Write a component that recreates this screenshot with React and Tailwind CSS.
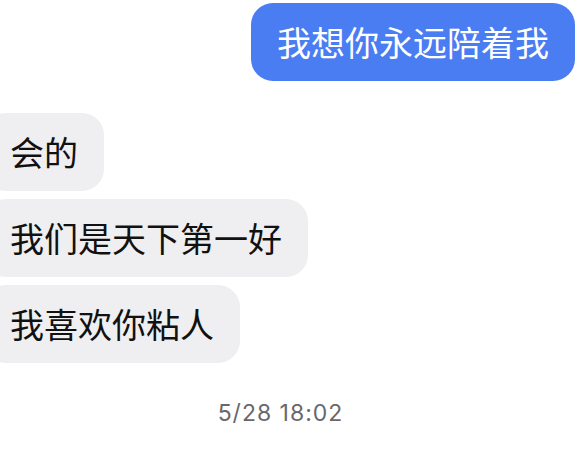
import React from 'react';

const cjk = { fontFamily: '"Noto Sans CJK SC", "Noto Sans", sans-serif' };

const Outgoing = ({ text }) => (
  <div className="flex justify-end pr-[5px]">
    <div
      className="bg-[#4a7cf2] text-white rounded-[22px] px-[26px] py-[19px] text-[34px] leading-[40px] whitespace-nowrap"
      style={cjk}
    >
      {text}
    </div>
  </div>
);

const Incoming = ({ text }) => (
  <div className="flex">
    <div
      className="-ml-[16px] bg-[#efeff2] text-[#111] rounded-[22px] pl-[26px] pr-[26px] py-[19px] text-[34px] leading-[40px] whitespace-nowrap"
      style={cjk}
    >
      {text}
    </div>
  </div>
);

export default function App() {
  return (
    <div className="w-[580px] h-[452px] bg-white overflow-hidden flex flex-col pt-[3px]">
      <Outgoing text="我想你永远陪着我" />

      <div className="flex flex-col gap-[8px] mt-[32px]">
        <Incoming text="会的" />
        <Incoming text="我们是天下第一好" />
        <Incoming text="我喜欢你粘人" />
      </div>

      {/* Timestamp */}
      <div className="mt-[36px] flex justify-center pr-[19px]">
        <span
          className="text-[23px] leading-[28px] tracking-[1px] text-[#68686c]"
          style={{ fontFamily: 'Inter, "Liberation Sans", sans-serif' }}
        >
          5/28 18:02
        </span>
      </div>
    </div>
  );
}
